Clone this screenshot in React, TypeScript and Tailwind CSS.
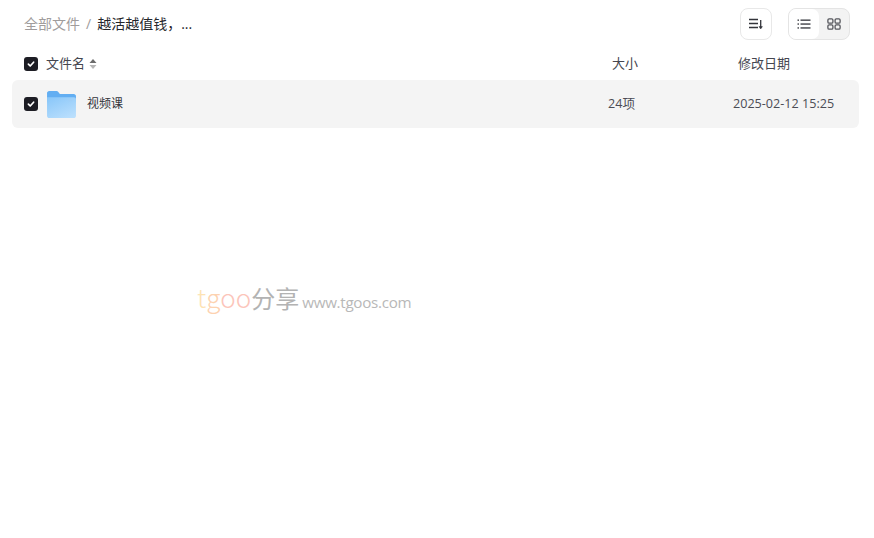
import React from "react";

function Check() {
  return (
    <span className="flex h-[14px] w-[14px] shrink-0 items-center justify-center rounded-[3px] bg-[#1d1d24]">
      <svg width="10" height="10" viewBox="0 0 10 10" fill="none">
        <path d="M2.4 5.2 4.2 7 7.6 3.2" stroke="#fff" strokeWidth="1.7" strokeLinecap="round" strokeLinejoin="round" />
      </svg>
    </span>
  );
}

function Folder() {
  return (
    <svg width="29" height="27" viewBox="0 0 30 28" className="block shrink-0">
      <defs>
        <linearGradient id="fg" x1="0.2" y1="0" x2="0.8" y2="1">
          <stop offset="0" stopColor="#8cc8f9" />
          <stop offset="1" stopColor="#badffd" />
        </linearGradient>
      </defs>
      <path d="M0 2.2C0 1 1 0 2.2 0h7.6c.8 0 1.4.4 1.9 1l1.6 2h14.5C29 3 30 4 30 5.2V12H0z" fill="#62aef2" />
      <path d="M0 6.4h28c1.1 0 2 .9 2 2V25.8c0 1.2-1 2.2-2.2 2.2H2.2C1 28 0 27 0 25.8z" fill="url(#fg)" />
      <rect x="22" y="9" width="4" height="1.5" rx="0.7" fill="#a0cff7" />
    </svg>
  );
}

export default function App() {
  return (
    <div className="relative h-[538px] w-[874px] overflow-hidden bg-white font-['Open_Sans','Noto_Sans_CJK_SC',sans-serif]">
      <div className="flex h-[48px] items-center px-[24px]">
        <div className="flex items-center text-[14px] leading-[16px]">
          <span className="text-[#a09c9c]">全部文件</span>
          <span className="mx-[6px] text-[#a09c9c]">/</span>
          <span className="text-[#25262b]">越活越值钱，...</span>
        </div>
        <div className="ml-auto flex items-center gap-[16px]">
          <button className="flex h-[32px] w-[32px] items-center justify-center rounded-[8px] border border-[#e8e8e8] bg-white">
            <svg width="16" height="14" viewBox="0 0 16 14" fill="none" stroke="#33343a" strokeWidth="1.3">
              <path d="M1 2.5h9M1 6.5h9M1 10.5h9" />
              <path d="M12.7 3v8" />
              <path d="M11 9.6h3.4L12.7 12z" fill="#33343a" strokeWidth="0.5" />
            </svg>
          </button>
          <div className="flex h-[32px] w-[62px] rounded-[8px] border border-[#e4e4e4] bg-[#f3f3f3]">
            <span className="flex h-full w-[30px] items-center justify-center rounded-[7px] bg-white">
              <svg width="14" height="12" viewBox="0 0 14 12" fill="#33343a">
                <rect x="0.5" y="1.5" width="1.5" height="1.3" />
                <rect x="3.5" y="1.5" width="10" height="1.3" />
                <rect x="0.5" y="5.4" width="1.5" height="1.3" />
                <rect x="3.5" y="5.4" width="10" height="1.3" />
                <rect x="0.5" y="9.3" width="1.5" height="1.3" />
                <rect x="3.5" y="9.3" width="10" height="1.3" />
              </svg>
            </span>
            <span className="flex h-full flex-1 items-center justify-center">
              <svg width="14" height="12" viewBox="0 0 14 12" fill="none" stroke="#55565c" strokeWidth="1.3">
                <rect x="0.9" y="0.9" width="5" height="4.2" rx="1.2" />
                <rect x="8.1" y="0.9" width="5" height="4.2" rx="1.2" />
                <rect x="0.9" y="6.9" width="5" height="4.2" rx="1.2" />
                <rect x="8.1" y="6.9" width="5" height="4.2" rx="1.2" />
              </svg>
            </span>
          </div>
        </div>
      </div>

      <div className="flex h-[32px] items-center pl-[24px] text-[13px] text-[#45464f]">
        <Check />
        <span className="relative -top-px ml-[8px] leading-[16px]">文件名</span>
        <svg width="8" height="12" viewBox="0 0 8 12" className="ml-[4px]">
          <path d="M4 1 7.5 5h-7z" fill="#6b6b6b" />
          <path d="M4 11 .5 7h7z" fill="#b5b5b5" />
        </svg>
        <span className="relative -top-px ml-[515px] leading-[16px]">大小</span>
        <span className="relative -top-px ml-[100px] leading-[16px]">修改日期</span>
      </div>

      <div className="mx-[12px] flex h-[48px] w-[847px] items-center rounded-[6px] bg-[#f4f4f4] pl-[12px] text-[12px] text-[#4b4c55]">
        <Check />
        <span className="ml-[9px]"><Folder /></span>
        <span className="ml-[11px] w-[521px] text-[#33343c]">视频课</span>
        <span className="w-[125px] text-[12.6px]">24项</span>
        <span className="text-[12.6px]">2025-02-12 15:25</span>
      </div>

      <div className="absolute left-[197px] top-[280px] flex items-baseline whitespace-nowrap font-['Noto_Sans_CJK_SC',sans-serif]">
        <span className="text-[26px] font-light leading-[34px] text-[#fde3b4]">t</span>
        <span className="text-[26px] font-light leading-[34px] text-[#fdd2b0]">g</span>
        <span className="text-[26px] font-light leading-[34px] text-[#fcc5ba]">oo</span>
        <span className="text-[24px] leading-[34px] text-[#b3b3b3]">分享</span>
        <span className="ml-[3px] text-[15.2px] font-['Open_Sans',sans-serif] tracking-[-0.3px] leading-[34px] text-[#b8b8b8]">www.tgoos.com</span>
      </div>
    </div>
  );
}
